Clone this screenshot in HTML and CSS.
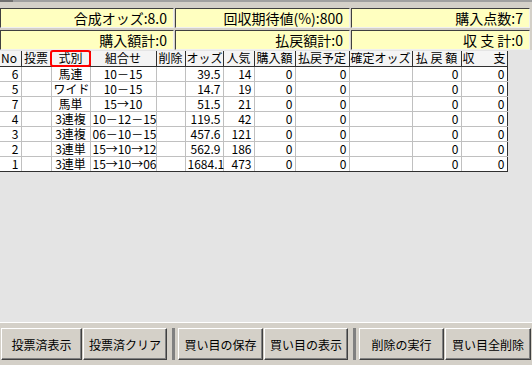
FILE: index.html
```html
<!DOCTYPE html>
<html>
	<head>
		<meta charset="UTF-8">
		<title>買い目一覧</title>
		<link rel="stylesheet" href="styles.css">
	</head>
	<body>
		<div class="win">
			<div class="topbar"><span class="topbar-tab"></span></div>

			<div class="summary">
				<div class="box">合成オッズ:8.0</div>
				<div class="box">回収期待値(%):800</div>
				<div class="box">購入点数:7</div>
				<div class="box">購入額計:0</div>
				<div class="box">払戻額計:0</div>
				<div class="box">収 支 計:0</div>
			</div>

			<div class="listarea">
				<div class="listwrap">
					<table class="list">
						<colgroup>
							<col style="width:21px"><col style="width:30px"><col style="width:39px"><col style="width:66px">
							<col style="width:29px"><col style="width:38px"><col style="width:31px"><col style="width:41px">
							<col style="width:54px"><col style="width:63px"><col style="width:49px"><col style="width:46px">
						</colgroup>
						<thead>
							<tr>
								<th class="l">No</th>
								<th>投票</th>
								<th>式別</th>
								<th>組合せ</th>
								<th>削除</th>
								<th>オッズ</th>
								<th>人気</th>
								<th>購入額</th>
								<th>払戻予定</th>
								<th>確定オッズ</th>
								<th>払 戻 額</th>
								<th class="just"><span>収</span><span>支</span></th>
							</tr>
						</thead>
						<tbody>
							<tr><td class="r">6</td><td></td><td class="c">馬連</td><td class="c">10－15</td><td></td><td class="r">39.5</td><td class="r">14</td><td class="r">0</td><td class="r">0</td><td></td><td class="r">0</td><td class="r">0</td></tr>
							<tr><td class="r">5</td><td></td><td class="c">ワイド</td><td class="c">10－15</td><td></td><td class="r">14.7</td><td class="r">19</td><td class="r">0</td><td class="r">0</td><td></td><td class="r">0</td><td class="r">0</td></tr>
							<tr><td class="r">7</td><td></td><td class="c">馬単</td><td class="c">15→10</td><td></td><td class="r">51.5</td><td class="r">21</td><td class="r">0</td><td class="r">0</td><td></td><td class="r">0</td><td class="r">0</td></tr>
							<tr><td class="r">4</td><td></td><td class="c">3連複</td><td>10－12－15</td><td></td><td class="r">119.5</td><td class="r">42</td><td class="r">0</td><td class="r">0</td><td></td><td class="r">0</td><td class="r">0</td></tr>
							<tr><td class="r">3</td><td></td><td class="c">3連複</td><td>06－10－15</td><td></td><td class="r">457.6</td><td class="r">121</td><td class="r">0</td><td class="r">0</td><td></td><td class="r">0</td><td class="r">0</td></tr>
							<tr><td class="r">2</td><td></td><td class="c">3連単</td><td>15→10→12</td><td></td><td class="r">562.9</td><td class="r">186</td><td class="r">0</td><td class="r">0</td><td></td><td class="r">0</td><td class="r">0</td></tr>
							<tr><td class="r">1</td><td></td><td class="c">3連単</td><td>15→10→06</td><td></td><td class="r">1684.1</td><td class="r">473</td><td class="r">0</td><td class="r">0</td><td></td><td class="r">0</td><td class="r">0</td></tr>
						</tbody>
					</table>
					<div class="mark"></div>
				</div>
			</div>

			<div class="btnbar">
				<div class="btngroup">
					<button class="btn w81">投票済表示</button>
					<button class="btn w84">投票済クリア</button>
				</div>
				<span class="sep"></span>
				<div class="btngroup">
					<button class="btn w85">買い目の保存</button>
					<button class="btn w84">買い目の表示</button>
				</div>
				<span class="sep"></span>
				<div class="btngroup">
					<button class="btn w85">削除の実行</button>
					<button class="btn w86">買い目全削除</button>
				</div>
			</div>
		</div>
	</body>
</html>
```

FILE: styles.css
```css
html, body {
	margin: 0;
	padding: 0;
}

body {
	width: 532px;
	height: 365px;
	overflow: hidden;
	background: #d4d0c8;
	font-family: "Noto Sans CJK JP", "Liberation Sans", sans-serif;
	color: #000;
}

.win {
	height: 365px;
	display: flex;
	flex-direction: column;
}

/* 上の細い帯 */
.topbar {
	height: 7px;
	flex: none;
	border-top: 2px solid #a0a0a0;
	box-sizing: border-box;
	background: #d4d0c8;
	position: relative;
}

.topbar-tab {
	position: absolute;
	left: 0;
	top: -2px;
	width: 13px;
	height: 2px;
	background: #707070;
}

/* 合計欄 */
.summary {
	display: grid;
	grid-template-columns: 174px 175px 179px;
	grid-auto-rows: 20px;
	column-gap: 1px;
	row-gap: 2px;
	padding: 1px 0 0 0;
	flex: none;
}

.box {
	background: #ffffc0;
	border: 1px solid;
	border-color: #404040 #f0f0f0 #f0f0f0 #404040;
	box-sizing: border-box;
	font-size: 14px;
	line-height: 18px;
	text-align: right;
	padding-right: 6px;
	white-space: pre;
}

/* 一覧 */
.listarea {
	flex: 1;
	background: #e4e4e4;
	padding-top: 1px;
	border-bottom: 1px solid #ffffff;
}

.listwrap {
	position: relative;
	width: 507px;
}

.list {
	border-collapse: collapse;
	table-layout: fixed;
	width: 507px;
	font-size: 12px;
}

.list th,
.list td {
	height: 15px;
	line-height: 14px;
	padding: 0 2px;
	white-space: nowrap;
	box-sizing: border-box;
}

.list th {
	font-weight: normal;
	background: #f4f4f4;
	border-right: 1px solid #303030;
	border-bottom: 1px solid #303030;
	text-align: center;
	padding: 0 1px;
}

.list th.l {
	text-align: left;
}

.list th.just span:last-child {
	float: right;
}

.list th.just span:first-child {
	float: left;
}

.list td {
	background: #fff;
	border-right: 1px solid #c0c0c0;
	border-bottom: 1px solid #c0c0c0;
}

.list td:last-child {
	border-right-color: #303030;
}

.list tr:last-child td {
	border-bottom-color: #303030;
}

.list td.r {
	text-align: right;
}

.list td.c {
	text-align: center;
}

.mark {
	position: absolute;
	left: 50px;
	top: -1px;
	width: 41px;
	height: 17px;
	border: 2px solid #ff0000;
	border-radius: 3px;
	box-sizing: border-box;
}

/* ボタン */
.btnbar {
	height: 42px;
	flex: none;
	display: flex;
	align-items: center;
	padding: 0 0 0 1px;
	box-sizing: border-box;
}

.btngroup {
	display: flex;
	gap: 1px;
}

.sep {
	width: 3px;
	height: 32px;
	background: #808080;
	margin: 0 3px 0 5px;
}

.btn {
	height: 32px;
	background: #d4d0c8;
	border: 1px solid;
	border-color: #ffffff #404040 #404040 #ffffff;
	box-shadow: inset -1px -1px 0 #808080;
	font-family: "Noto Sans CJK JP", sans-serif;
	font-size: 12px;
	color: #000;
	padding: 0;
	margin: 0;
}

.w81 { width: 81px; }
.w84 { width: 84px; }
.w85 { width: 85px; }
.w86 { width: 86px; }
```
